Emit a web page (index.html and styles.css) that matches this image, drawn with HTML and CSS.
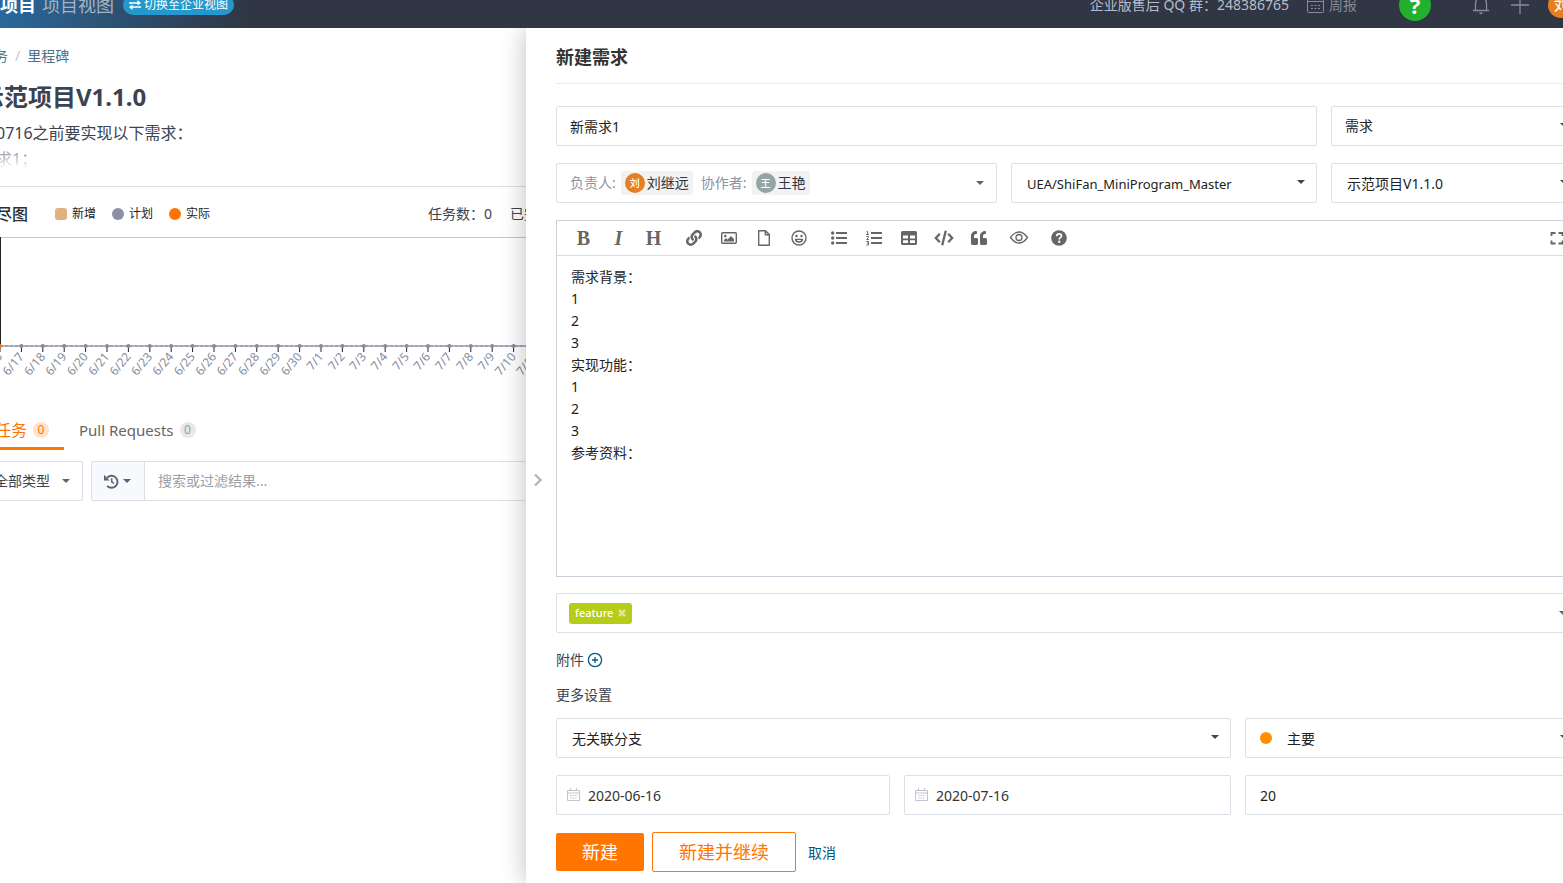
FILE: index.html
```html
<!DOCTYPE html>
<html lang="zh-CN">
<head>
<meta charset="utf-8">
<meta name="viewport" content="width=device-width, initial-scale=1">
<title>新建需求</title>
<link rel="stylesheet" href="styles.css">
</head>
<body>
<header class="topbar">
  <div class="topbar-left">
    <strong class="topbar-project">范项目</strong>
    <span class="topbar-view">项目视图</span>
    <button type="button" class="switch-btn">
      <svg class="switch-icon" viewBox="0 0 12 10"><path d="M0 3h9M3 7h9" stroke="currentColor" stroke-width="1.6" fill="none"/><path d="M8.500 0 12 3 8.500 5.500zM3.500 4.500 0 7l3.500 3z" fill="currentColor"/></svg>
      切换至企业视图
    </button>
  </div>
  <div class="topbar-right">
    <span class="qq">企业版售后 QQ 群：248386765</span>
    <a class="weekly" href="#">
      <svg class="weekly-icon" viewBox="0 0 17 16"><rect x=".5" y="1.500" width="16" height="14" rx="1" fill="none" stroke="currentColor"/><path d="M1 4.500h15" stroke="currentColor"/><path d="M4 8.500h2m1.500 0h2m1.500 0h2M4 11.500h2m1.500 0h2m1.500 0h2" stroke="currentColor" stroke-width="1.200"/></svg>
      周报
    </a>
    <button type="button" class="help">?</button>
    <button type="button" class="icon-btn" aria-label="通知"><svg class="bell" viewBox="0 0 18 20"><path d="M1 15.500h16M3.500 15V8a5.500 5.500 0 0 1 11 0v7M9 2.500V0" fill="none" stroke="currentColor" stroke-width="1.300"/><path d="M6.500 17.500h5l-2.500 2z" fill="currentColor"/></svg></button>
    <button type="button" class="icon-btn plus-btn" aria-label="添加"><svg class="plus" viewBox="0 0 18 18"><path d="M9 0v18M0 9h18" stroke="currentColor" stroke-width="1.300"/></svg></button>
    <span class="avatar avatar-me">刘</span>
  </div>
</header>

<main class="layout">
  <section class="milestone">
    <nav class="crumbs"><a href="#">任务</a><span class="crumb-sep">/</span><a href="#">里程碑</a></nav>
    <h1 class="ms-title">示范项目V1.1.0</h1>
    <div class="ms-desc">
      <p>在0716之前要实现以下需求：</p>
      <p class="ms-faded">需求1；</p>
    </div>
    <div class="burndown-head">
      <h2 class="burndown-title">燃尽图</h2>
      <ul class="legend">
        <li><i class="mark mark-new"></i>新增</li>
        <li><i class="mark mark-plan"></i>计划</li>
        <li><i class="mark mark-real"></i>实际</li>
      </ul>
      <div class="counts"><span>任务数：0</span><span>已完成：0</span></div>
    </div>
    <svg class="chart" id="chart" viewBox="0 0 546 150" role="img" aria-label="燃尽图">
      <path d="M20 .5H600" stroke="#c8c8c8"/>
      <path d="M20.500 0V109" stroke="#222"/>
      <path d="M20 109H600" stroke="#b4b9c4" stroke-width="2"/>
      <path d="M20 109H600" stroke="#858ca0" stroke-dasharray="3 2"/>
      <g id="ticks"></g>
      <circle cx="20" cy="109" r="2" fill="#ff7500"/>
    </svg>
    <div class="tabs">
      <button type="button" class="tab tab-active">任务<span class="badge badge-active">0</span></button>
      <button type="button" class="tab">Pull Requests<span class="badge">0</span></button>
    </div>
    <div class="filters">
      <button type="button" class="type-filter">全部类型<i class="caret"></i></button>
      <div class="search">
        <button type="button" class="history" aria-label="历史">
          <svg class="history-icon" viewBox="0 0 14 14"><path d="M2.800 3.600A5.600 5.600 0 1 1 3 11.200" fill="none" stroke="currentColor" stroke-width="1.800"/><path d="M0 .8v5.200h5.200z" fill="currentColor"/><path d="M7.200 4v3.400l2 1.400" fill="none" stroke="currentColor" stroke-width="1.400"/></svg>
          <i class="caret"></i>
        </button>
        <input class="search-input" type="text" placeholder="搜索或过滤结果..." aria-label="搜索">
      </div>
    </div>
  </section>

  <section class="drawer">
    <button type="button" class="collapse" aria-label="收起"><svg class="collapse-icon" viewBox="0 0 10 14"><path d="M2 1.500 7.500 7 2 12.500" fill="none" stroke="currentColor" stroke-width="2.400"/></svg></button>
    <form class="form">
      <h2 class="form-title">新建需求</h2>
      <div class="row row-name">
        <input class="field" type="text" value="新需求1" aria-label="标题">
        <div class="select-wrap"><select class="field" aria-label="类型"><option>需求</option></select></div>
      </div>
      <div class="row row-people">
        <button type="button" class="field people">
          <span class="people-label">负责人:</span>
          <span class="chip"><span class="avatar avatar-liu">刘</span>刘继远</span>
          <span class="people-label people-second">协作者:</span>
          <span class="chip"><span class="avatar avatar-wang">王</span>王艳</span>
          <i class="caret people-caret"></i>
        </button>
        <div class="select-wrap"><select class="field inset repo" aria-label="仓库"><option>UEA/ShiFan_MiniProgram_Master</option></select></div>
        <div class="select-wrap"><select class="field inset" aria-label="里程碑"><option>示范项目V1.1.0</option></select></div>
      </div>

      <div class="editor">
        <div class="toolbar">
          <div class="tools">
            <button type="button" class="tool letter">B</button>
            <button type="button" class="tool letter letter-i">I</button>
            <button type="button" class="tool letter">H</button>
          </div>
          <div class="tools">
            <button type="button" class="tool" aria-label="链接"><svg viewBox="0 0 512 512"><path fill="currentColor" d="M326.612 185.391c59.747 59.809 58.927 155.698.36 214.590-.11.12-.24.25-.36.37l-67.200 67.200c-59.270 59.270-155.699 59.262-214.960 0-59.270-59.260-59.270-155.700 0-214.960l37.106-37.106c9.840-9.840 26.786-3.300 27.294 10.606.648 17.722 3.826 35.527 9.690 52.721 1.986 5.822.567 12.262-3.783 16.612l-13.087 13.087c-28.026 28.026-28.905 73.660-1.155 101.960 28.024 28.579 74.086 28.749 102.325.51l67.200-67.190c28.191-28.191 28.073-73.757 0-101.830-3.701-3.694-7.429-6.564-10.341-8.569a16.037 16.037 0 0 1-6.947-12.606c-.396-10.567 3.348-21.456 11.698-29.806l21.054-21.055c5.521-5.521 14.182-6.199 20.584-1.731a152.482 152.482 0 0 1 20.522 17.197zM467.547 44.449c-59.261-59.262-155.690-59.270-214.960 0l-67.200 67.200c-.12.12-.25.25-.36.37-58.566 58.892-59.387 154.781.36 214.590a152.454 152.454 0 0 0 20.521 17.196c6.402 4.468 15.064 3.789 20.584-1.731l21.054-21.055c8.350-8.350 12.094-19.239 11.698-29.806a16.037 16.037 0 0 0-6.947-12.606c-2.912-2.005-6.640-4.875-10.341-8.569-28.073-28.073-28.191-73.639 0-101.830l67.200-67.190c28.239-28.239 74.300-28.069 102.325.51 27.750 28.300 26.872 73.934-1.155 101.960l-13.087 13.087c-4.350 4.350-5.769 10.790-3.783 16.612 5.864 17.194 9.042 34.999 9.690 52.721.509 13.906 17.454 20.446 27.294 10.606l37.106-37.106c59.271-59.259 59.271-155.699.001-214.959z"/></svg></button>
            <button type="button" class="tool" aria-label="图片"><svg viewBox="0 0 16 16"><rect x=".7" y="2.700" width="14.600" height="10.600" rx="1" fill="none" stroke="currentColor" stroke-width="1.400"/><circle cx="4.300" cy="6" r="1.300" fill="currentColor"/><path d="M3 11.500V10l2-2 1.500 1.500L10 6l3 3v2.500z" fill="currentColor"/></svg></button>
            <button type="button" class="tool" aria-label="文件"><svg viewBox="0 0 16 16"><path d="M2.700.7h6.800l3.800 3.800v10.800H2.700zM9.300.7v4h4" fill="none" stroke="currentColor" stroke-width="1.400" stroke-linejoin="round"/></svg></button>
            <button type="button" class="tool" aria-label="表情"><svg viewBox="0 0 16 16"><circle cx="8" cy="8" r="7" fill="none" stroke="currentColor" stroke-width="1.400"/><circle cx="5.500" cy="6" r="1.200" fill="currentColor"/><circle cx="10.500" cy="6" r="1.200" fill="currentColor"/><path d="M3.800 8.800h8.400a4.200 4 0 0 1-8.400 0zm1.700 1.300a2.600 1.500 0 0 0 5 0z" fill="currentColor" fill-rule="evenodd"/></svg></button>
          </div>
          <div class="tools">
            <button type="button" class="tool" aria-label="无序列表"><svg viewBox="0 0 16 16"><path d="M5 3h11M5 8h11M5 13h11" stroke="currentColor" stroke-width="2.200"/><circle cx="1.700" cy="3" r="1.700" fill="currentColor"/><circle cx="1.700" cy="8" r="1.700" fill="currentColor"/><circle cx="1.700" cy="13" r="1.700" fill="currentColor"/></svg></button>
            <button type="button" class="tool" aria-label="有序列表"><svg viewBox="0 0 16 16"><path d="M5 3h11M5 8h11M5 13h11" stroke="currentColor" stroke-width="2.200"/><path d="M.6 1.500h1v3M.3 4.500h2.600M.4 6.500h2v1L.6 9.500h2.200M.4 11.500h2.100v3.500H.4M1 13.200h1.500" fill="none" stroke="currentColor"/></svg></button>
            <button type="button" class="tool" aria-label="表格"><svg viewBox="0 0 16 16"><path fill="currentColor" fill-rule="evenodd" d="M1.500 1h13A1.500 1.500 0 0 1 16 2.500v11a1.500 1.500 0 0 1-1.500 1.500h-13A1.500 1.500 0 0 1 0 13.500v-11A1.500 1.500 0 0 1 1.500 1zM2 5.500V8.500h5v-3zm7 0V8.500h5v-3zM2 10.200V13h5v-2.800zm7 0V13h5v-2.800z"/></svg></button>
            <button type="button" class="tool" aria-label="代码"><svg class="wide" viewBox="0 0 20 16"><path d="M5.800 3.800 1.800 8l4 4.200M14.200 3.800l4 4.200-4 4.200M11.800.8l-3.600 14.400" fill="none" stroke="currentColor" stroke-width="2.300"/></svg></button>
            <button type="button" class="tool" aria-label="引用"><svg viewBox="0 0 512 512"><path fill="currentColor" d="M464 256h-80v-64c0-35.300 28.700-64 64-64h8c13.300 0 24-10.700 24-24V56c0-13.300-10.700-24-24-24h-8c-88.400 0-160 71.600-160 160v240c0 26.500 21.500 48 48 48h128c26.500 0 48-21.500 48-48V304c0-26.500-21.500-48-48-48zm-288 0H96v-64c0-35.300 28.700-64 64-64h8c13.300 0 24-10.700 24-24V56c0-13.300-10.700-24-24-24h-8C71.600 32 0 103.600 0 192v240c0 26.500 21.500 48 48 48h128c26.500 0 48-21.500 48-48V304c0-26.500-21.500-48-48-48z"/></svg></button>
          </div>
          <div class="tools">
            <button type="button" class="tool" aria-label="预览"><svg class="wide" viewBox="0 0 20 16"><path d="M1.500 7.500Q5.500 2 10 2t8.500 5.500Q14.500 13 10 13T1.500 7.500z" fill="none" stroke="currentColor" stroke-width="1.300"/><circle cx="10" cy="7.500" r="3" fill="none" stroke="currentColor" stroke-width="1.300"/></svg></button>
          </div>
          <div class="tools">
            <button type="button" class="tool" aria-label="帮助"><svg viewBox="0 0 16 16"><circle cx="8" cy="8" r="7.800" fill="currentColor"/><path d="M5.700 6.200c0-1.500 1-2.300 2.400-2.300s2.400.8 2.400 2.100c0 1.700-2.300 1.700-2.300 3.500" fill="none" stroke="#fff" stroke-width="1.700"/><circle cx="8.200" cy="11.800" r="1.200" fill="#fff"/></svg></button>
          </div>
          <button type="button" class="tool fullscreen" aria-label="全屏"><svg viewBox="0 0 16 16"><path d="M2.500 6V3h4M9.500 3h4v3M13.500 10.500v3h-4M6.500 13.500h-4v-3" fill="none" stroke="currentColor" stroke-width="1.900"/></svg></button>
        </div>
        <textarea class="editor-text" aria-label="描述">需求背景：
1
2
3
实现功能：
1
2
3
参考资料：</textarea>
      </div>

      <div class="row tags-row">
        <div class="field tags">
          <span class="tag">feature<button type="button" class="tag-x" aria-label="移除"><svg viewBox="0 0 8 8"><path d="M1 1l6 6M7 1 1 7" stroke="currentColor" stroke-width="2.600"/></svg></button></span>
          <i class="caret people-caret"></i>
        </div>
      </div>

      <p class="attach">附件<button type="button" class="attach-btn" aria-label="添加附件"><svg viewBox="0 0 16 16"><circle cx="8" cy="8" r="6.600" fill="none" stroke="currentColor" stroke-width="1.300"/><path d="M8 5v6M5 8h6" stroke="currentColor" stroke-width="1.300"/></svg></button></p>
      <p class="more">更多设置</p>

      <div class="row row-branch">
        <div class="select-wrap"><select class="field inset" aria-label="分支"><option>无关联分支</option></select></div>
        <div class="select-wrap priority"><i class="dot"></i><select class="field inset" aria-label="优先级"><option>主要</option></select></div>
      </div>
      <div class="row row-dates">
        <label class="field date"><svg class="cal" viewBox="0 0 13 15"><path d="M.5 2.500h12v10H.5zM.5 5h12M3.500 0v3M9.500 0v3" fill="none" stroke="currentColor"/><path d="M3 7.500h7M3 10h7" stroke="currentColor" stroke-dasharray="1.500 1"/></svg><input class="date-input" type="text" value="2020-06-16" aria-label="开始日期"></label>
        <label class="field date"><svg class="cal" viewBox="0 0 13 15"><path d="M.5 2.500h12v10H.5zM.5 5h12M3.500 0v3M9.500 0v3" fill="none" stroke="currentColor"/><path d="M3 7.500h7M3 10h7" stroke="currentColor" stroke-dasharray="1.500 1"/></svg><input class="date-input" type="text" value="2020-07-16" aria-label="结束日期"></label>
        <input class="field hours" type="text" value="20" aria-label="工时">
      </div>
      <div class="actions">
        <button type="submit" class="btn btn-primary">新建</button>
        <button type="button" class="btn btn-outline">新建并继续</button>
        <a class="cancel" href="#">取消</a>
      </div>
    </form>
  </section>
</main>
<script src="chart.js"></script>
</body>
</html>
```
FILE: styles.css
```css
* { box-sizing: border-box; }
body {
  margin: 0;
  height: 100vh;
  display: flex;
  flex-direction: column;
  overflow: hidden;
  font: 14px/20px "Noto Sans", "Noto Sans CJK SC", sans-serif;
  color: #3b4351;
  background: #fff;
}
h1, h2, p, ul { margin: 0; padding: 0; }
ul { list-style: none; }
a { color: inherit; text-decoration: none; }
button, input, select, textarea { font: inherit; color: inherit; }
button { background: none; border: 0; padding: 0; }
svg { display: block; flex: none; }

/* Top bar */
.topbar {
  flex: none;
  height: 46px;
  margin-top: -18px;
  display: flex;
  align-items: center;
  justify-content: space-between;
  background: linear-gradient(90deg, #2a689c 0, #303643 250px);
  color: #b6bdca;
  white-space: nowrap;
}
.topbar-left { display: flex; align-items: center; margin-left: -18px; font-size: 18px; }
.topbar-project { color: #fff; margin-right: 6px; }
.topbar-view { color: #a5b3c2; }
.switch-btn {
  display: flex;
  align-items: center;
  gap: 3px;
  height: 20px;
  margin-left: 9px;
  padding: 0 6px;
  border-radius: 10px;
  background: #2498cc;
  color: #fff;
  font-size: 12px;
}
.switch-icon { width: 12px; height: 10px; }
.topbar-right { display: flex; align-items: center; margin-right: -11px; }
.weekly { display: flex; align-items: center; gap: 5px; margin-left: 18px; color: #858c9a; }
.weekly-icon { width: 17px; height: 16px; }
.help {
  width: 32px;
  height: 32px;
  margin-left: 42px;
  border-radius: 50%;
  background: #22b02e;
  color: #fff;
  font-size: 22px;
  font-weight: bold;
}
.icon-btn { margin-left: 41px; color: #858c9a; }
.plus-btn { margin-left: 21px; }
.bell { width: 18px; height: 20px; }
.plus { width: 18px; height: 18px; }
.avatar {
  display: inline-flex;
  align-items: center;
  justify-content: center;
  width: 20px;
  height: 20px;
  border-radius: 50%;
  color: #fff;
  font-size: 10px;
  font-weight: 500;
}
.avatar-me { width: 26px; height: 26px; margin-left: 19px; background: #e67e22; font-size: 14px; }
.avatar-liu { background: #e67e22; }
.avatar-wang { background: #95a5a6; }

/* Page split */
.layout { flex: 1; min-height: 0; display: grid; grid-template-columns: 526fr 1037fr; }

/* Milestone */
.milestone { margin-left: -20px; padding-top: 18px; min-width: 0; overflow: hidden; }
.crumbs { color: #4d7486; }
.crumb-sep { margin: 0 7px; color: #c3c8d0; }
.ms-title { margin-top: 15px; font-size: 24px; line-height: 32px; }
.ms-desc { padding: 7px 0 14px; font-size: 16px; line-height: 26px; border-bottom: 1px solid #dadfe6; }
.ms-faded {
  background: linear-gradient(#8d939f 20%, #fff 90%);
  background-clip: text;
  -webkit-background-clip: text;
  color: transparent;
}
.burndown-head { display: flex; align-items: center; height: 50px; padding-top: 4px; white-space: nowrap; overflow: hidden; }
.burndown-title { font-size: 16px; font-weight: 500; color: #2a2f3a; }
.legend { display: flex; gap: 16px; margin-left: 27px; font-size: 12px; color: #222; }
.legend li { display: flex; align-items: center; gap: 5px; }
.mark { width: 12px; height: 12px; border-radius: 50%; }
.mark-new { border-radius: 3px; background: #e3b083; }
.mark-plan { background: #8b90a5; }
.mark-real { background: #ff7500; }
.counts { display: flex; gap: 18px; margin-left: auto; margin-right: -48px; }
.chart { width: 100%; height: auto; font-size: 12px; fill: #858ca0; }
.tabs { display: flex; margin-top: 25px; font-size: 15px; }
.tab { display: flex; align-items: center; height: 38px; padding: 0 15px; border-bottom: 3px solid transparent; color: #666; }
.tab-active { border-color: #ff7500; color: #ff7500; font-size: 16px; }
.badge {
  width: 16px;
  height: 16px;
  margin-left: 6px;
  border-radius: 50%;
  background: #e6e8ea;
  color: #8f9bb3;
  font-size: 12px;
  line-height: 16px;
  text-align: center;
}
.badge-active { background: #ffe2cc; color: #ff7500; }
.filters { display: flex; gap: 8px; height: 40px; margin-top: 11px; }
.type-filter {
  display: flex;
  align-items: center;
  gap: 12px;
  padding: 0 12px 0 13px;
  border: 1px solid #dadfe6;
  border-radius: 2px;
  white-space: nowrap;
}
.caret { border: 4px solid transparent; border-top: 4px solid #5b6474; border-bottom: 0; }
.search { flex: 1; display: flex; border: 1px solid #dadfe6; border-right: 0; border-radius: 2px; }
.history { display: flex; align-items: center; gap: 4px; padding: 0 13px 0 12px; border-right: 1px solid #dadfe6; background: #f7f9fc; color: #5b6474; }
.history-icon { width: 15px; height: 15px; }
.search-input { flex: 1; min-width: 0; border: 0; padding: 0 13px; }
.search-input::placeholder { color: #9a9fa8; }

/* Drawer */
.drawer { position: relative; min-width: 0; padding: 17px 0 0 30px; background: #fff; box-shadow: 0 0 24px rgba(0, 0, 0, .26); clip-path: inset(0 0 0 -40px); }
.collapse { position: absolute; left: 7px; top: 52%; color: #b3b7c0; }
.collapse-icon { width: 10px; height: 14px; }
.form { margin-right: -17px; }
.form-title { padding-bottom: 14px; margin-bottom: 22px; border-bottom: 1px solid #e8eaed; font-size: 18px; line-height: 24px; color: #333; }
.row { display: grid; gap: 14px; margin-bottom: 17px; }
.row-name { grid-template-columns: 761fr 249fr; }
.row-people { grid-template-columns: 441fr 306fr 249fr; }
.row-branch { grid-template-columns: 675fr 335fr; }
.row-dates { grid-template-columns: 334fr 327fr 335fr; }
.field {
  width: 100%;
  min-width: 0;
  height: 40px;
  padding: 0 13px;
  border: 1px solid #dcdfe6;
  border-radius: 2px;
  background: #fff;
  color: #222;
}
.inset { padding: 2px 13px 0 15px; }
.repo { font-size: 13px; }
.hours { padding-left: 14px; }
select.field { appearance: none; }
.select-wrap { position: relative; min-width: 0; }
.select-wrap::after {
  content: "";
  position: absolute;
  right: 12px;
  top: 17px;
  border: 4px solid transparent;
  border-top: 4px solid #444;
  border-bottom: 0;
}
.people { display: flex; align-items: center; padding-right: 12px; white-space: nowrap; }
.people-label { margin-right: 5px; color: #8d93a3; }
.people-second { margin-left: 8px; }
.people-caret { margin-left: auto; }
.chip { display: flex; align-items: center; gap: 2px; height: 24px; padding: 0 4px; border-radius: 3px; background: #f2f2f2; color: #303643; }
.editor { display: flex; flex-direction: column; height: 357px; margin-bottom: 16px; border: 1px solid #cdcfdb; }
.toolbar { flex: none; display: flex; align-items: center; gap: 5px; height: 35px; padding: 0 9px; border-bottom: 1px solid #dcdde3; color: #666; }
.tools { display: flex; }
.tool { display: flex; align-items: center; justify-content: center; width: 35px; height: 34px; }
.tool svg { width: 16px; height: 16px; }
.tool .wide { width: 20px; }
.letter { font: bold 20px/20px "Liberation Serif", serif; }
.letter-i { font-style: italic; }
.fullscreen { margin-left: auto; margin-right: -4px; }
.editor-text { flex: 1; padding: 10px 14px; border: 0; resize: none; font-size: 14px; line-height: 22px; color: #222; }
.tags { display: flex; align-items: center; padding: 0 12px; }
.tag { display: flex; align-items: center; gap: 5px; height: 21px; padding: 0 6px; border-radius: 3px; background: #b5cc18; color: #fff; font-size: 11px; font-weight: 500; }
.tag-x { color: #dde79a; }
.tag-x svg { width: 8px; height: 8px; }
.attach { display: flex; align-items: center; gap: 3px; margin-bottom: 15px; }
.attach-btn { color: #005980; }
.attach-btn svg { width: 16px; height: 16px; }
.more { margin-bottom: 13px; }
.priority { display: flex; align-items: center; }
.priority .field { padding-left: 41px; }
.dot { position: absolute; left: 15px; width: 12px; height: 12px; border-radius: 50%; background: #ff8f00; }
.date { display: flex; align-items: center; gap: 8px; padding-left: 10px; }
.cal { width: 13px; height: 15px; color: #c0c4cc; }
.date-input { flex: 1; min-width: 0; padding: 2px 0 0; border: 0; color: #333; }
.actions { display: flex; align-items: center; gap: 8px; }
.btn { height: 38px; padding: 0 26px; border-radius: 2px; font-size: 18px; white-space: nowrap; }
.btn-primary { background: #ff7500; color: #fff; }
.btn-outline { height: 40px; border: 1px solid #ff7500; color: #ff7500; }
.cancel { margin-left: 4px; padding-top: 2px; color: #005980; }
```
FILE: chart.js
```js
const NS = "http://www.w3.org/2000/svg";
const ticks = document.getElementById("ticks");
const step = 21.4;

function add(name, attrs, text) {
  const node = document.createElementNS(NS, name);
  for (const key in attrs) node.setAttribute(key, attrs[key]);
  if (text) node.textContent = text;
  ticks.appendChild(node);
}

for (let i = 0; i <= 25; i++) {
  const day = new Date(2020, 5, 16 + i);
  const x = 20 + i * step;
  add("path", { d: `M${x} 109v6`, stroke: "#222" });
  if (i) add("circle", { cx: x, cy: 109, r: 2, fill: "#858ca0" });
  add("text", { x: x + 3, y: 120, "text-anchor": "end", transform: `rotate(-50 ${x + 3} 120)` },
    `${day.getMonth() + 1}/${day.getDate()}`);
}
```
